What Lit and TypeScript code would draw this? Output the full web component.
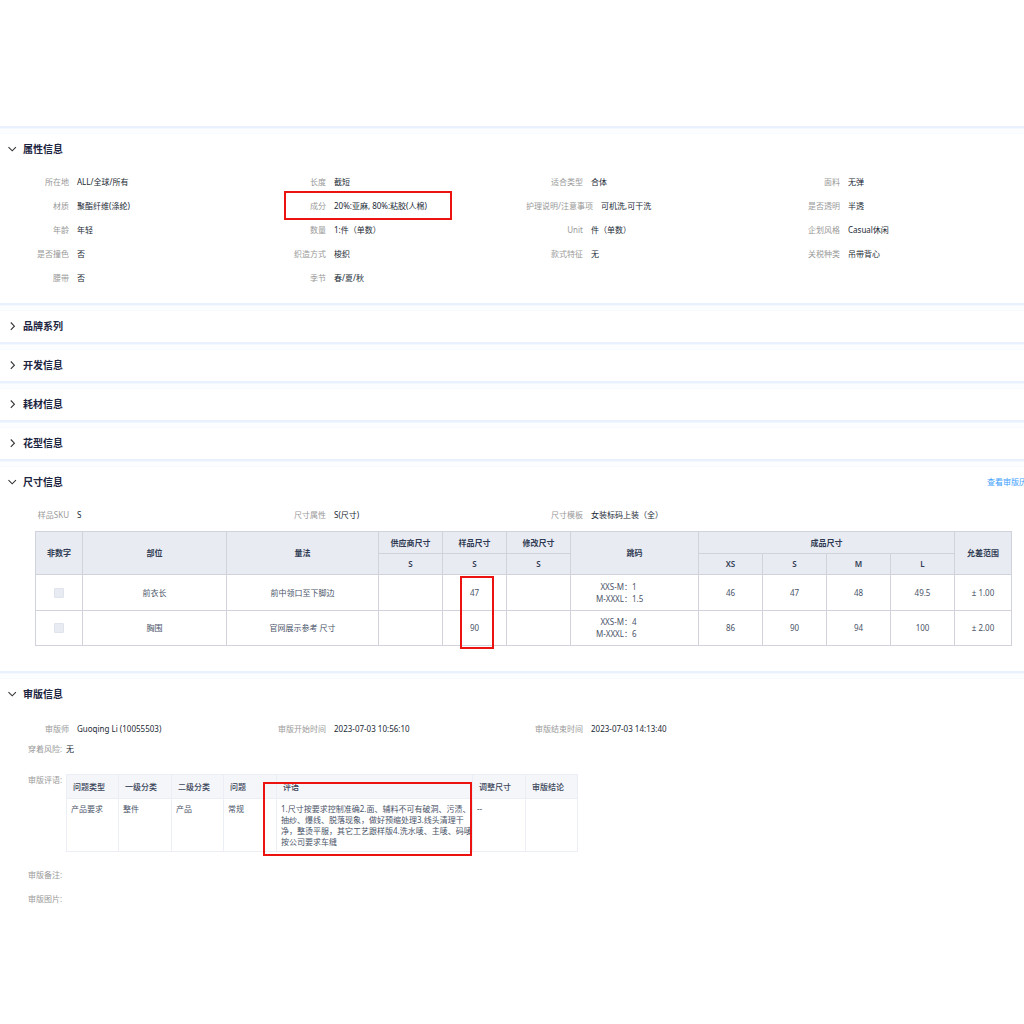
import { LitElement, html, css, nothing, TemplateResult } from "lit";
import { customElement, property } from "lit/decorators.js";
import { classMap } from "lit/directives/class-map.js";

type Pair = { label: string; value: string; marked?: boolean };

const ATTRIBUTES: Pair[] = [
  { label: "所在地", value: "ALL/全球/所有" },
  { label: "长度", value: "截短" },
  { label: "适合类型", value: "合体" },
  { label: "面料", value: "无弹" },
  { label: "材质", value: "聚酯纤维(涤纶)" },
  { label: "成分", value: "20%:亚麻, 80%:粘胶(人棉)", marked: true },
  { label: "护理说明/注意事项", value: "可机洗,可干洗" },
  { label: "是否透明", value: "半透" },
  { label: "年龄", value: "年轻" },
  { label: "数量", value: "1:件（单数）" },
  { label: "Unit", value: "件（单数）" },
  { label: "企划风格", value: "Casual休闲" },
  { label: "是否撞色", value: "否" },
  { label: "织造方式", value: "梭织" },
  { label: "款式特征", value: "无" },
  { label: "关税种类", value: "吊带背心" },
  { label: "腰带", value: "否" },
  { label: "季节", value: "春/夏/秋" },
];

const COLLAPSED = ["品牌系列", "开发信息", "耗材信息", "花型信息"];

const SIZE_META: Pair[] = [
  { label: "样品SKU", value: "S" },
  { label: "尺寸属性", value: "S(尺寸)" },
  { label: "尺寸模板", value: "女装标码上装（全）" },
];

const REVIEW_META: Pair[] = [
  { label: "审版师", value: "Guoqing Li (10055503)" },
  { label: "审版开始时间", value: "2023-07-03 10:56:10" },
  { label: "审版结束时间", value: "2023-07-03 14:13:40" },
];

const SIZE_ROWS = [
  {
    part: "前衣长",
    method: "前中领口至下脚边",
    sample: "47",
    steps: [["XXS-M：", "1"], ["M-XXXL：", "1.5"]],
    sizes: ["46", "47", "48", "49.5"],
    tolerance: "± 1.00",
  },
  {
    part: "胸围",
    method: "官网展示参考 尺寸",
    sample: "90",
    steps: [["XXS-M：", "4"], ["M-XXXL：", "6"]],
    sizes: ["86", "90", "94", "100"],
    tolerance: "± 2.00",
  },
];

const COMMENT =
  "1.尺寸按要求控制准确2.面、辅料不可有破洞、污渍、抽纱、爆线、脱落现象，做好预缩处理3.线头清理干净，整烫平服，其它工艺跟样版4.洗水唛、主唛、码唛按公司要求车缝";

@customElement("info-section")
class InfoSection extends LitElement {
  @property() heading = "";
  @property({ type: Boolean, reflect: true }) open = false;

  static styles = css`
    :host {
      display: block;
    }
    .band {
      height: 8px;
      background: linear-gradient(#e8f1fd 0 2px, #f3f8fe 2px 3px, #fbfdff 3px 7px, #f7faff 7px);
    }
    .bar {
      display: flex;
      align-items: center;
      box-sizing: border-box;
      height: 31px;
      padding: 0 0 2px 6px;
      margin-right: -11px;
    }
    h2 {
      flex: 1;
      margin: 0;
      font-size: 10px;
      line-height: 16px;
    }
    button {
      display: flex;
      align-items: center;
      gap: 5px;
      padding: 0;
      border: 0;
      background: none;
      font: inherit;
      color: #1c2440;
      cursor: pointer;
    }
    svg {
      width: 12px;
      height: 12px;
      fill: none;
      stroke: #333;
      stroke-width: 1.1;
    }
  `;

  render() {
    return html`
      <div class="band"></div>
      <div class="bar">
        <h2>
          <button aria-expanded=${this.open ? "true" : "false"} @click=${() => (this.open = !this.open)}>
            <svg viewBox="0 0 12 12" aria-hidden="true">
              <path d=${this.open ? "M2.5 4.2 L6.2 7.8 L9.9 4.2" : "M4.8 2.5 L8.4 6.2 L4.8 9.9"} />
            </svg>
            ${this.heading}
          </button>
        </h2>
        <slot name="action"></slot>
      </div>
      ${this.open ? html`<slot></slot>` : nothing}
    `;
  }
}

@customElement("app-root")
class AppRoot extends LitElement {
  static styles = css`
    :host {
      display: block;
      box-sizing: border-box;
      min-height: 100vh;
      padding-top: 126px;
      overflow: hidden;
      background: #fff;
      color: #222a35;
      font-family: "Noto Sans", "Noto Sans CJK SC", sans-serif;
      font-size: 8px;
      line-height: 12px;
    }
    a {
      color: #409eff;
      text-decoration: none;
      white-space: nowrap;
    }
    .body {
      padding: 5px 0 13px;
    }
    .body.sizes {
      padding-bottom: 25px;
    }
    .body.review {
      padding-top: 7px;
    }
    .pairs {
      display: grid;
      grid-template-columns: repeat(4, 1fr);
      grid-auto-rows: 24px;
      margin: 0 -16px 0 12px;
    }
    .pair {
      position: relative;
      display: flex;
      align-items: center;
      gap: 8px;
      white-space: nowrap;
    }
    dt,
    .caption {
      color: #999;
    }
    dt {
      min-width: 57px;
      text-align: right;
    }
    dd {
      margin: 0;
    }
    .mark {
      position: absolute;
      box-sizing: border-box;
      border: 2px solid #ec1210;
      pointer-events: none;
    }
    .mark.material {
      left: 15px;
      top: -3px;
      width: 168px;
      height: 29px;
    }
    .mark.sample {
      left: 17px;
      top: 1px;
      width: 34px;
      height: 73px;
    }
    .mark.comment {
      left: -14px;
      top: 7px;
      width: 209px;
      height: 74px;
    }
    table {
      border-collapse: collapse;
      table-layout: fixed;
    }
    th,
    td {
      padding: 0;
    }
    .scroll {
      margin: 4px 13px 0 35px;
    }
    .size-table {
      width: 100%;
      color: #4a5468;
      text-align: center;
    }
    .size-table th,
    .size-table td {
      border: 1px solid #d0d3dc;
    }
    .size-table th {
      height: 21px;
      background: #e8ebf2;
      color: #303b52;
      font-weight: 600;
    }
    .size-table tr:nth-child(2) th {
      height: 20px;
    }
    .size-table td {
      height: 35px;
    }
    .size-table tr:nth-child(2) td {
      height: 34px;
    }
    .anchor {
      position: relative;
    }
    .size-table input {
      appearance: none;
      display: block;
      width: 10px;
      height: 10px;
      margin: 0 auto;
      border: 1px solid #dfe3eb;
      border-radius: 1px;
      background: #e8ebf2;
    }
    .step {
      display: grid;
      grid-template-columns: 61px 1fr;
      text-align: left;
    }
    .step span:first-child {
      text-align: right;
    }
    .line {
      display: flex;
      align-items: center;
      gap: 4px;
      height: 24px;
      padding-left: 28px;
    }
    .line.risk {
      height: 16px;
    }
    .line.comments {
      align-items: flex-start;
      height: auto;
      margin: 17px 0 11px;
    }
    .caption {
      width: 34px;
      white-space: nowrap;
    }
    .review-table {
      width: 50%;
      color: #4a5468;
      text-align: left;
      line-height: 11px;
    }
    .review-table th,
    .review-table td {
      border: 1px solid #ebeef5;
    }
    .review-table th {
      height: 23px;
      padding-left: 6px;
      background: #f4f6fa;
      color: #3a4458;
      font-weight: 500;
    }
    .review-table td {
      height: 48px;
      padding: 4px 0 0 4px;
      vertical-align: top;
    }
  `;

  private pairs(items: Pair[]): TemplateResult {
    return html`<dl class="pairs">
      ${items.map(
        (p) => html`<div class="pair">
          <dt>${p.label}</dt>
          <dd>${p.value}</dd>
          ${p.marked ? html`<span class="mark material"></span>` : nothing}
        </div>`
      )}
    </dl>`;
  }

  private sizeTable(): TemplateResult {
    const widths = [47, 144, 152, 64, 64, 64, 128, 64, 64, 64, 64, 57];
    return html`<div class="scroll">
      <table class="size-table">
        <colgroup>
          ${widths.map((w) => html`<col style="width:${w}px" />`)}
        </colgroup>
        <thead>
          <tr>
            <th rowspan="2">非数字</th>
            <th rowspan="2">部位</th>
            <th rowspan="2">量法</th>
            <th>供应商尺寸</th>
            <th>样品尺寸</th>
            <th>修改尺寸</th>
            <th rowspan="2">跳码</th>
            <th colspan="4">成品尺寸</th>
            <th rowspan="2">允差范围</th>
          </tr>
          <tr>
            ${["S", "S", "S", "XS", "S", "M", "L"].map((s) => html`<th>${s}</th>`)}
          </tr>
        </thead>
        <tbody>
          ${SIZE_ROWS.map(
            (r, i) => html`<tr>
              <td><input type="checkbox" disabled aria-label="非数字" /></td>
              <td>${r.part}</td>
              <td>${r.method}</td>
              <td></td>
              <td class=${classMap({ anchor: i === 0 })}>
                ${r.sample}${i === 0 ? html`<span class="mark sample"></span>` : nothing}
              </td>
              <td></td>
              <td>
                ${r.steps.map(([k, v]) => html`<div class="step"><span>${k}</span><span>${v}</span></div>`)}
              </td>
              ${r.sizes.map((s) => html`<td>${s}</td>`)}
              <td>${r.tolerance}</td>
            </tr>`
          )}
        </tbody>
      </table>
    </div>`;
  }

  private reviewTable(): TemplateResult {
    const widths = [52, 53, 52, 53, 196, 53, 52];
    const heads = ["问题类型", "一级分类", "二级分类", "问题", "评语", "调整尺寸", "审版结论"];
    const cells = ["产品要求", "整件", "产品", "常规", COMMENT, "--", ""];
    return html`<table class="review-table">
      <colgroup>
        ${widths.map((w) => html`<col style="width:${w}px" />`)}
      </colgroup>
      <thead>
        <tr>
          ${heads.map(
            (h, i) => html`<th class=${classMap({ anchor: i === 4 })}>
              ${h}${i === 4 ? html`<span class="mark comment"></span>` : nothing}
            </th>`
          )}
        </tr>
      </thead>
      <tbody>
        <tr>
          ${cells.map((c) => html`<td>${c}</td>`)}
        </tr>
      </tbody>
    </table>`;
  }

  render() {
    return html`
      <info-section heading="属性信息" open>
        <div class="body">${this.pairs(ATTRIBUTES)}</div>
      </info-section>
      ${COLLAPSED.map((h) => html`<info-section heading=${h}></info-section>`)}
      <info-section heading="尺寸信息" open>
        <a slot="action" href="#history">查看审版历史</a>
        <div class="body sizes">${this.pairs(SIZE_META)} ${this.sizeTable()}</div>
      </info-section>
      <info-section heading="审版信息" open>
        <div class="body review">
          ${this.pairs(REVIEW_META)}
          <div class="line risk"><span class="caption">穿着风险:</span><span>无</span></div>
          <div class="line comments"><span class="caption">审版评语:</span>${this.reviewTable()}</div>
          <div class="line"><span class="caption">审版备注:</span></div>
          <div class="line"><span class="caption">审版图片:</span></div>
        </div>
      </info-section>
    `;
  }
}
